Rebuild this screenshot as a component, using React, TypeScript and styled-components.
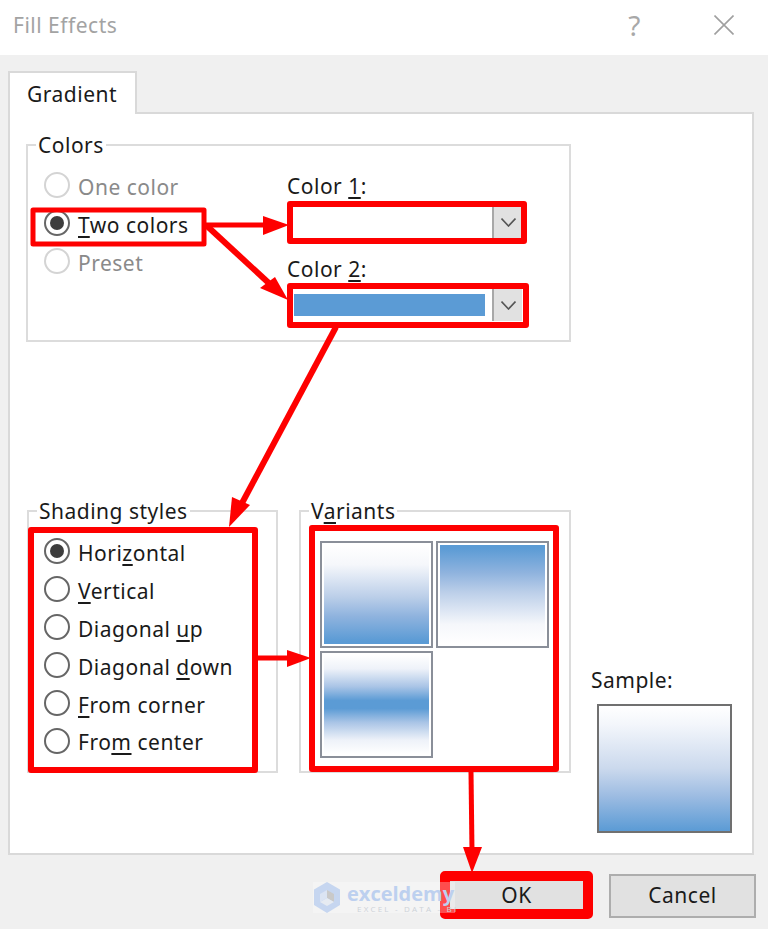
import React from "react";
import styled, { createGlobalStyle } from "styled-components";

const GlobalStyle = createGlobalStyle`
html, body {
    margin: 0;
    padding: 0;
    background: #f0f0f0;
}
* { box-sizing: border-box; }
`

const FONT = `"Noto Sans", "Open Sans", "Liberation Sans", sans-serif`

const shadingOptions = [
    { before: "Hori", key: "z", after: "ontal", checked: true },
    { before: "", key: "V", after: "ertical" },
    { before: "Diagonal ", key: "u", after: "p" },
    { before: "Diagonal ", key: "d", after: "own" },
    { before: "", key: "F", after: "rom corner" },
    { before: "Fro", key: "m", after: " center" },
]

// red boxes drawn on top of the dialog: x, y, w, h, stroke
const redBoxes = [
    [33, 210, 171, 34, 5],
    [290, 204, 234, 37, 6],
    [290, 286, 236, 39, 6],
    [31, 530, 224, 240, 6],
    [312, 528, 244, 241, 6],
    [445, 876, 143, 38, 10],
]

// line from -> to, width, then arrow head points
const redArrows = [
    { line: [205, 225, 270, 225], width: 5, head: "263,216 289,225 263,235" },
    { line: [207, 226, 272, 286], width: 6, head: "275,277 288,300 260,288" },
    { line: [336, 327, 241, 505], width: 6, head: "250,505 229,527 232,497" },
    { line: [258, 658, 292, 658], width: 5, head: "287,650 311,658 287,667" },
    { line: [471, 772, 472, 852], width: 5, head: "463,847 482,847 472,873" },
]

const App = () => {
    return (
        <Dialog>
            <GlobalStyle />
            <TitleBar>
                <Title>Fill Effects</Title>
                <HelpMark>?</HelpMark>
                <CloseIcon viewBox="0 0 20 20">
                    <path d="M0.5 0.5 L19.5 19.5 M19.5 0.5 L0.5 19.5" />
                </CloseIcon>
            </TitleBar>
            <Body>
                <Tab>Gradient</Tab>
                <Panel>
                    <ColorsGroup>
                        <Legend>Colors</Legend>
                        <RadioColumn>
                            <RadioRow $disabled><Radio $disabled /><span>One color</span></RadioRow>
                            <RadioRow><Radio $checked /><span><u>T</u>wo colors</span></RadioRow>
                            <RadioRow $disabled><Radio $disabled /><span>Preset</span></RadioRow>
                        </RadioColumn>
                        <ComboColumn>
                            <ComboLabel>Color <u>1</u>:</ComboLabel>
                            <Combo>
                                <ComboValue />
                                <ComboButton><Chevron /></ComboButton>
                            </Combo>
                            <ComboLabel $second>Color <u>2</u>:</ComboLabel>
                            <Combo>
                                <ComboValue><ColorFill /></ComboValue>
                                <ComboButton><Chevron /></ComboButton>
                            </Combo>
                        </ComboColumn>
                    </ColorsGroup>
                    <LowerRow>
                        <ShadingGroup>
                            <Legend>Shading styles</Legend>
                            {shadingOptions.map((o) => (
                                <RadioRow key={o.key}>
                                    <Radio $checked={o.checked} />
                                    <span>{o.before}<u>{o.key}</u>{o.after}</span>
                                </RadioRow>
                            ))}
                        </ShadingGroup>
                        <VariantsGroup>
                            <Legend>V<u>a</u>riants</Legend>
                            <VariantGrid>
                                <Variant $kind="down" />
                                <Variant $kind="up" />
                                <Variant $kind="middle" />
                            </VariantGrid>
                        </VariantsGroup>
                        <SampleColumn>
                            <SampleLabel>Sample:</SampleLabel>
                            <SampleBox />
                        </SampleColumn>
                    </LowerRow>
                </Panel>
                <Footer>
                    <Button>OK</Button>
                    <Button>Cancel</Button>
                </Footer>
            </Body>
            <Annotations viewBox="0 0 768 929">
                {redArrows.map((a, i) => (
                    <g key={i}>
                        <line x1={a.line[0]} y1={a.line[1]} x2={a.line[2]} y2={a.line[3]} stroke="#fe0000" strokeWidth={a.width} />
                        <polygon points={a.head} fill="#fe0000" />
                    </g>
                ))}
                {redBoxes.map(([x, y, w, h, s], i) => (
                    <rect key={i} x={x} y={y} width={w} height={h} fill="none" stroke="#fe0000" strokeWidth={s} strokeLinejoin="round" />
                ))}
            </Annotations>
            <Watermark>
                <LogoIcon viewBox="0 0 28 31">
                    <polygon points="14,0 27,7.5 27,23 14,31 1,23 1,7.5" fill="#c6d6f0" />
                    <polygon points="14,8 21,12 21,20 14,16" fill="#c9c9c9" />
                    <polygon points="14,16 21,20 14,24 7,20" fill="#e6ebf2" />
                    <polygon points="14,8 14,16 7,20 7,12" fill="#dbe4f3" />
                </LogoIcon>
                <WatermarkText>
                    <WatermarkName>exceldemy</WatermarkName>
                    <WatermarkSub>EXCEL - DATA - BI</WatermarkSub>
                </WatermarkText>
            </Watermark>
        </Dialog>
    )
}

const Dialog = styled.div`
position: relative; // 주석 레이어 위함
width: 768px;
height: 929px;
overflow: hidden;
background: #f0f0f0;
font-family: ${FONT};
font-size: 21px;
letter-spacing: 0.5px;
color: #1a1a1a;
u { text-underline-offset: 3px; text-decoration-thickness: 2px; }
`

const TitleBar = styled.div`
height: 55px;
background: #fff;
display: flex;
align-items: center;
padding: 0 0 5px 13px;
`

const Title = styled.div`
flex: 1;
font-size: 21px;
color: #a3a3a3;
`

const HelpMark = styled.div`
font-size: 28px;
line-height: 32px;
color: #a8a8a8;
margin-right: 73px;
`

const CloseIcon = styled.svg`
width: 20px;
height: 20px;
margin-right: 34px;
fill: none;
stroke: #a0a0a0;
stroke-width: 1.6;
`

const Body = styled.div`
padding: 16px 0 0 8px;
`

const Tab = styled.div`
width: 129px;
height: 43px;
margin-bottom: -2px;
position: relative;
z-index: 1;
background: #fff;
border: 2px solid #d9d9d9;
border-bottom: none;
padding: 6px 0 0 17px;
line-height: 30px;
`

const Panel = styled.div`
width: 746px;
height: 743px;
background: #fff;
border: 2px solid #d9d9d9;
padding: 30px 0 0 16px;
`

const Group = styled.div`
position: relative;
border: 2px solid #dcdcdc;
`

const Legend = styled.div`
position: absolute;
top: -15px;
left: 8px;
padding: 0 2px;
background: #fff;
line-height: 28px;
`

const ColorsGroup = styled(Group)`
width: 545px;
height: 198px;
display: flex;
padding: 22px 0 0 16px;
`

const RadioColumn = styled.div`
width: 243px;
`

const RadioRow = styled.div<{ $disabled?: boolean }>`
height: 37.9px;
display: flex;
align-items: center;
gap: 8px;
color: ${(props) => props.$disabled ? "#8a8a8a" : "#1a1a1a"};
`

const Radio = styled.span<{ $checked?: boolean; $disabled?: boolean }>`
width: 26px;
height: 26px;
flex: none;
margin-top: -3px;
border-radius: 50%;
border: 2px solid ${(props) => props.$disabled ? "#d4d4d4" : "#666"};
display: flex;
align-items: center;
justify-content: center;
&::after {
    content: "";
    display: ${(props) => props.$checked ? "block" : "none"};
    width: 14px;
    height: 14px;
    border-radius: 50%;
    background: #3d3d3d;
}
`

const ComboColumn = styled.div`
display: flex;
flex-direction: column;
align-items: flex-start;
margin-top: 4px;
`

const ComboLabel = styled.div<{ $second?: boolean }>`
line-height: 28px;
margin-top: ${(props) => props.$second ? "17px" : "0"};
margin-bottom: 6px;
`

const Combo = styled.div`
width: 235px;
height: 32px;
display: flex;
background: #fff;
`

const ComboValue = styled.div`
width: 205px;
padding: 5px 7px;
`

const ColorFill = styled.div`
height: 100%;
background: #5b9bd5;
`

const ComboButton = styled.div`
width: 30px;
background: #e1e1e1;
border-left: 2px solid #a8a8a8;
display: flex;
align-items: center;
justify-content: center;
`

const ChevronIcon = styled.svg`
width: 15px;
height: 9px;
fill: none;
stroke: #555;
stroke-width: 1.6;
`

const Chevron = () => (
    <ChevronIcon viewBox="0 0 15 9">
        <path d="M0.5 0.5 L7.5 8 L14.5 0.5" />
    </ChevronIcon>
)

const LowerRow = styled.div`
display: flex;
margin-top: 168px;
margin-left: 1px;
`

const ShadingGroup = styled(Group)`
width: 251px;
height: 263px;
padding: 22px 0 0 15px;
`

const VariantsGroup = styled(Group)`
width: 272px;
height: 263px;
margin-left: 21px;
padding: 29px 0 0 20px;
`

const VariantGrid = styled.div`
display: grid;
grid-template-columns: 113px 113px;
grid-auto-rows: 107px;
gap: 3px;
margin-left: -1px;
`

const gradients = {
    down: "linear-gradient(180deg, #fff 0%, #f5f7fb 20%, #bccfe9 52%, #8fb3de 72%, #5b9bd5 97%)",
    up: "linear-gradient(0deg, #fff 0%, #f5f7fb 20%, #bccfe9 52%, #8fb3de 72%, #5b9bd5 97%)",
    middle: "linear-gradient(180deg, #fff 0%, #eef2f9 14%, #a9c4e6 32%, #5b9bd5 46%, #5b9bd5 54%, #a9c4e6 68%, #eef2f9 86%, #fff 100%)",
}

const Variant = styled.div<{ $kind: keyof typeof gradients }>`
border: 2px solid #8a8f99;
padding: 2px;
background: #fff;
&::after {
    content: "";
    display: block;
    height: 100%;
    background: ${(props) => gradients[props.$kind]};
}
`

const SampleColumn = styled.div`
margin-left: 20px;
padding-top: 156px;
`

const SampleLabel = styled.div`
line-height: 28px;
margin-bottom: 10px;
`

const SampleBox = styled.div`
width: 135px;
height: 129px;
margin-left: 6px;
border: 2px solid #707070;
background: linear-gradient(180deg, #fff 0%, #f3f6fb 15%, #cbd9ed 50%, #9dbce2 72%, #5b9bd5 100%);
`

const Footer = styled.div`
display: flex;
justify-content: flex-end;
gap: 19px;
padding: 19px 12px 0 0;
`

const Button = styled.div`
width: 147px;
height: 44px;
padding-bottom: 2px;
background: #e1e1e1;
border: 2px solid #adadad;
display: flex;
align-items: center;
justify-content: center;
`

const Annotations = styled.svg`
position: absolute;
top: 0;
left: 0;
width: 768px;
height: 929px;
pointer-events: none;
`

const Watermark = styled.div`
position: absolute;
left: 313px;
top: 882px;
width: 142px;
height: 31px;
display: flex;
gap: 6px;
background: rgba(255, 255, 255, 0.3);
`

const LogoIcon = styled.svg`
width: 28px;
height: 31px;
flex: none;
`

const WatermarkText = styled.div`
white-space: nowrap;
letter-spacing: 0;
padding-top: 3px;
`

const WatermarkName = styled.div`
font-family: "Open Sans", sans-serif;
font-size: 20px;
font-weight: 700;
line-height: 18px;
color: #bdd0ef;
`

const WatermarkSub = styled.div`
font-family: "Open Sans", sans-serif;
font-size: 8px;
line-height: 8px;
letter-spacing: 2.2px;
color: #cdd2d8;
margin: 2px 0 0 10px;
`

export default App;
